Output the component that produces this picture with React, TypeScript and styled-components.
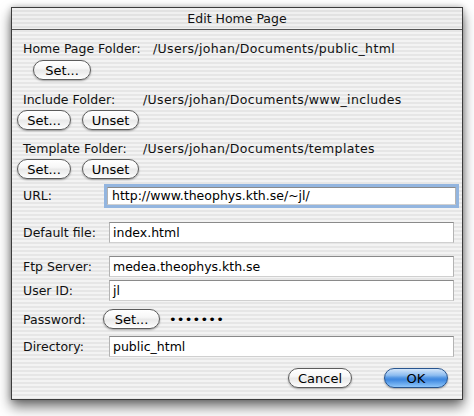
import React from "react";
import styled, { createGlobalStyle } from "styled-components";

const Global = createGlobalStyle`
  html, body { margin: 0; padding: 0; background: #ffffff; }
  body { font-family: "DejaVu Sans", "Liberation Sans", sans-serif; font-size: 12.5px; color: #000; }
`;

const stripes = `repeating-linear-gradient(to bottom, #f3f3f3 0px, #f3f3f3 2px, #e6e6e6 2px, #e6e6e6 4px)`;

const Page = styled.div`
  width: 474px;
  height: 416px;
  padding: 7px 0 0 11px;
  box-sizing: border-box;
  background: #fff;
`;

const Window = styled.div`
  width: 452px;
  height: 393px;
  box-sizing: border-box;
  border: 1px solid #3c3c3c;
  background: ${stripes};
  box-shadow: 0 7px 12px rgba(0, 0, 0, 0.55), 0 0 6px rgba(0, 0, 0, 0.25);
  display: flex;
  flex-direction: column;
`;

const TitleBar = styled.div`
  height: 21px;
  border-bottom: 1px solid #555;
  display: flex;
  align-items: center;
  justify-content: center;
  font-size: 12.5px;
  color: #111;
  background: repeating-linear-gradient(to bottom, #f0f0f0 0px, #f0f0f0 2px, #e2e2e2 2px, #e2e2e2 4px);
`;

const Body = styled.div`
  flex: 1;
  display: flex;
  flex-direction: column;
  padding: 9px 8px 0 5px;
`;

const Line = styled.div<{ $h: number; $mt?: number; $pl?: number }>`
  height: ${(p) => p.$h}px;
  margin-top: ${(p) => p.$mt ?? 0}px;
  padding-left: ${(p) => p.$pl ?? 0}px;
  display: flex;
  align-items: center;
  white-space: nowrap;
`;

const Label = styled.span<{ $w: number }>`
  width: ${(p) => p.$w}px;
  flex: none;
  color: #111;
`;

const PathText = styled.span`
  color: #111;
  letter-spacing: 0.35px;
`;

const PillButton = styled.button<{ $w: number; $primary?: boolean }>`
  width: ${(p) => p.$w}px;
  height: 20px;
  flex: none;
  padding: 0;
  border-radius: 10px;
  border: 1px solid ${(p) => (p.$primary ? "#28558f" : "#5c5c5c")};
  background: ${(p) =>
    p.$primary
      ? "linear-gradient(to bottom, #d4e6fa 0%, #8cbcf0 35%, #4f93e2 50%, #3f88e0 60%, #8ec6fa 100%)"
      : "linear-gradient(to bottom, #ffffff 0%, #f7f7f7 40%, #e9e9e9 52%, #f2f2f2 75%, #ffffff 100%)"};
  box-shadow: 0 1px 2px rgba(0, 0, 0, 0.35);
  font-family: inherit;
  font-size: 13px;
  color: #000;
  display: flex;
  align-items: center;
  justify-content: center;
  margin-right: ${(p) => (p.$primary ? 0 : 11)}px;
`;

const Field = styled.div<{ $focus?: boolean }>`
  flex: 1;
  height: ${(p) => (p.$focus ? 16 : 19)}px;
  box-sizing: content-box;
  background: #fff;
  border-top: 1px solid #8a8a8a;
  border-left: 1px solid #b4b4b4;
  border-right: 1px solid #b4b4b4;
  border-bottom: 1px solid #d0d0d0;
  display: flex;
  align-items: center;
  padding-left: 3px;
  margin-left: ${(p) => (p.$focus ? -2 : 0)}px;
  margin-right: ${(p) => (p.$focus ? -2 : 0)}px;
  ${(p) =>
    p.$focus
      ? "box-shadow: 0 0 0 3px #93b5df; margin-top: 0; padding-left: 4px;"
      : ""}
  font-size: 12.5px;
  color: #000;
`;

const Dots = styled.span`
  font-size: 13px;
  letter-spacing: 0.2px;
  margin-left: -2px;
  color: #000;
`;

const Footer = styled.div`
  display: flex;
  justify-content: flex-end;
  align-items: center;
  padding-right: 6px;
  margin-top: 11px;
  gap: 21px;
`;

export default function App() {
  return (
    <Page>
      <Global />
      <Window>
        <TitleBar>Edit Home Page</TitleBar>
        <Body>
          <Line $h={18} $pl={6}>
            <Label $w={130}>Home Page Folder:</Label>
            <PathText>/Users/johan/Documents/public_html</PathText>
          </Line>
          <Line $h={20} $mt={3} $pl={16}>
            <PillButton $w={58}>Set...</PillButton>
          </Line>
          <Line $h={18} $mt={10} $pl={6}>
            <Label $w={120}>Include Folder:</Label>
            <PathText>/Users/johan/Documents/www_includes</PathText>
          </Line>
          <Line $h={20} $mt={2}>
            <PillButton $w={54}>Set...</PillButton>
            <PillButton $w={57}>Unset</PillButton>
          </Line>
          <Line $h={18} $mt={9} $pl={6}>
            <Label $w={120}>Template Folder:</Label>
            <PathText>/Users/johan/Documents/templates</PathText>
          </Line>
          <Line $h={20} $mt={2}>
            <PillButton $w={54}>Set...</PillButton>
            <PillButton $w={57}>Unset</PillButton>
          </Line>
          <Line $h={21} $mt={6} $pl={6}>
            <Label $w={86}>URL:</Label>
            <Field $focus>http://www.theophys.kth.se/~jl/</Field>
          </Line>
          <Line $h={21} $mt={16} $pl={6}>
            <Label $w={86}>Default file:</Label>
            <Field>index.html</Field>
          </Line>
          <Line $h={21} $mt={13} $pl={6}>
            <Label $w={86}>Ftp Server:</Label>
            <Field>medea.theophys.kth.se</Field>
          </Line>
          <Line $h={21} $mt={3} $pl={6}>
            <Label $w={86}>User ID:</Label>
            <Field>jl</Field>
          </Line>
          <Line $h={20} $mt={8} $pl={6}>
            <Label $w={80}>Password:</Label>
            <PillButton $w={57}>Set...</PillButton>
            <Dots>•••••••</Dots>
          </Line>
          <Line $h={21} $mt={7} $pl={6}>
            <Label $w={86}>Directory:</Label>
            <Field>public_html</Field>
          </Line>
          <Footer>
            <PillButton $w={64}>Cancel</PillButton>
            <PillButton $w={64} $primary>OK</PillButton>
          </Footer>
        </Body>
      </Window>
    </Page>
  );
}
